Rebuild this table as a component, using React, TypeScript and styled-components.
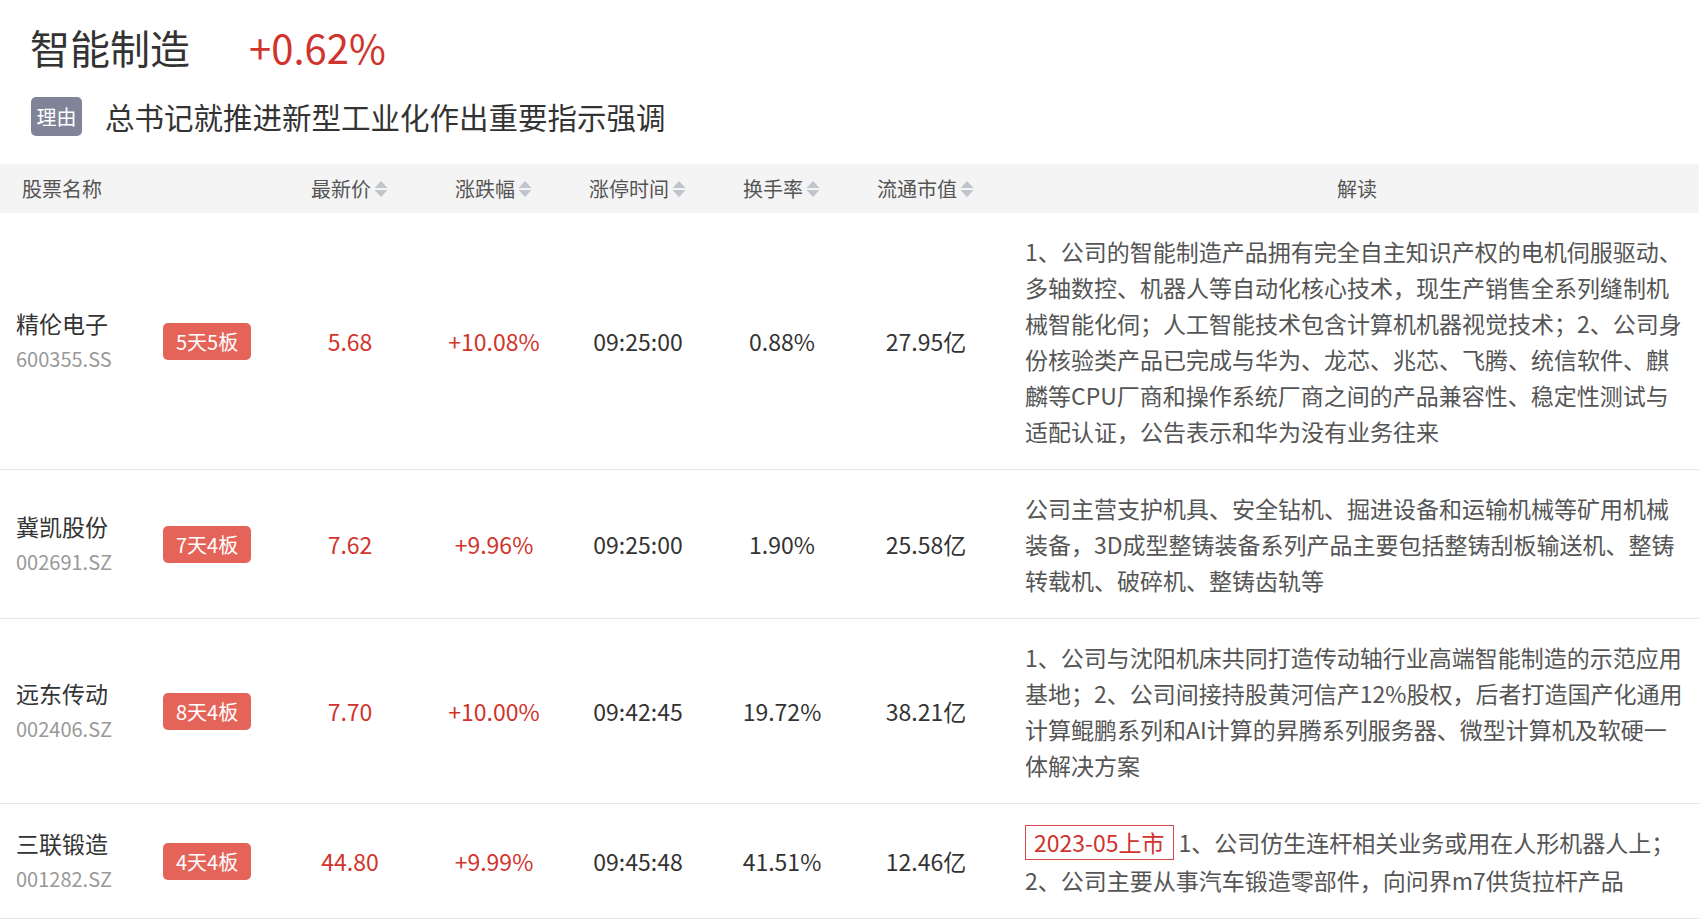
import React from 'react';
import styled, { createGlobalStyle } from 'styled-components';

const GlobalStyle = createGlobalStyle`
  html, body { margin: 0; padding: 0; background: #fff; }
  body {
    font-family: "Noto Sans CJK SC", "Noto Sans", sans-serif;
    color: #333;
  }
`;

const Page = styled.div`
  width: 1699px;
`;

const Top = styled.header`
  padding: 19px 0 0 30px;
`;

const TitleRow = styled.div`
  display: flex;
  align-items: center;
  height: 56px;
`;

const Title = styled.h1`
  margin: 0;
  font-size: 40px;
  font-weight: 400;
  line-height: 56px;
  color: #333;
`;

const Change = styled.span`
  margin-left: 59px;
  font-size: 40px;
  line-height: 56px;
  color: #d0342c;
`;

const ReasonRow = styled.div`
  display: flex;
  align-items: center;
  margin-top: 21px;
  height: 40px;
`;

const ReasonTag = styled.span`
  margin-left: 1px;
  width: 51px;
  height: 39px;
  border-radius: 5px;
  background: #7f8499;
  color: #fff;
  font-size: 20px;
  display: flex;
  align-items: center;
  justify-content: center;
`;

const ReasonText = styled.span`
  margin-left: 23px;
  font-size: 29.5px;
  line-height: 40px;
  color: #333;
`;

const Table = styled.section`
  margin-top: 28px;
`;

const HeadRow = styled.div`
  display: grid;
  grid-template-columns: 148px 130px repeat(5, 144px) 1fr;
  align-items: center;
  height: 49px;
  background: #f4f4f4;
  color: #555;
  font-size: 20px;
`;

const HeadName = styled.div`
  grid-column: span 2;
  padding-left: 22px;
`;

const HeadSort = styled.div`
  display: flex;
  align-items: center;
  justify-content: center;
  gap: 2px;
`;

const HeadDesc = styled.div`
  text-align: center;
  padding: 0 10px 0 27px;
`;

const SortIcon = styled.svg`
  display: block;
  width: 16px;
  height: 20px;
`;

const Row = styled.div`
  display: grid;
  grid-template-columns: 148px 130px repeat(5, 144px) 1fr;
  align-items: center;
  padding: 20px 0;
  border-bottom: 1px solid #e8e8e8;
`;

const NameCell = styled.div`
  padding-left: 16px;
  display: flex;
  flex-direction: column;
`;

const StockName = styled.span`
  font-size: 23px;
  line-height: 36px;
  color: #333;
`;

const StockCode = styled.span`
  font-size: 20px;
  line-height: 36px;
  color: #999;
`;

const Streak = styled.span`
  justify-self: start;
  margin-left: 15px;
  height: 37px;
  padding: 0 13px;
  border-radius: 5px;
  background: #e5645a;
  color: #fff;
  font-size: 20px;
  line-height: 37px;
`;

const Value = styled.div<{ $red?: boolean }>`
  text-align: center;
  font-size: 23px;
  line-height: 36px;
  color: ${(p) => (p.$red ? '#d0342c' : '#333')};
`;

const Desc = styled.div`
  padding: 0 10px 0 27px;
  font-size: 23px;
  line-height: 36px;
  color: #555;
`;

const ListedTag = styled.span`
  display: inline-block;
  box-sizing: border-box;
  height: 35px;
  line-height: 33px;
  padding: 0 8px;
  margin: 1px 5px 2px 0;
  border: 1px solid #d9474a;
  color: #d0342c;
  vertical-align: top;
`;

const Sort = () => (
  <SortIcon viewBox="0 0 16 20">
    <path d="M8 2 L14.5 9 L1.5 9 Z" fill="#c0c4cc" />
    <path d="M1.5 11 L14.5 11 L8 18 Z" fill="#c0c4cc" />
  </SortIcon>
);

type Stock = {
  name: string;
  code: string;
  streak: string;
  price: string;
  change: string;
  time: string;
  turnover: string;
  cap: string;
  listed?: string;
  desc: string;
};

const stocks: Stock[] = [
  {
    name: '精伦电子',
    code: '600355.SS',
    streak: '5天5板',
    price: '5.68',
    change: '+10.08%',
    time: '09:25:00',
    turnover: '0.88%',
    cap: '27.95亿',
    desc:
      '1、公司的智能制造产品拥有完全自主知识产权的电机伺服驱动、多轴数控、机器人等自动化核心技术，现生产销售全系列缝制机械智能化伺；人工智能技术包含计算机机器视觉技术；2、公司身份核验类产品已完成与华为、龙芯、兆芯、飞腾、统信软件、麒麟等CPU厂商和操作系统厂商之间的产品兼容性、稳定性测试与适配认证，公告表示和华为没有业务往来',
  },
  {
    name: '冀凯股份',
    code: '002691.SZ',
    streak: '7天4板',
    price: '7.62',
    change: '+9.96%',
    time: '09:25:00',
    turnover: '1.90%',
    cap: '25.58亿',
    desc:
      '公司主营支护机具、安全钻机、掘进设备和运输机械等矿用机械装备，3D成型整铸装备系列产品主要包括整铸刮板输送机、整铸转载机、破碎机、整铸齿轨等',
  },
  {
    name: '远东传动',
    code: '002406.SZ',
    streak: '8天4板',
    price: '7.70',
    change: '+10.00%',
    time: '09:42:45',
    turnover: '19.72%',
    cap: '38.21亿',
    desc:
      '1、公司与沈阳机床共同打造传动轴行业高端智能制造的示范应用基地；2、公司间接持股黄河信产12%股权，后者打造国产化通用计算鲲鹏系列和AI计算的昇腾系列服务器、微型计算机及软硬一体解决方案',
  },
  {
    name: '三联锻造',
    code: '001282.SZ',
    streak: '4天4板',
    price: '44.80',
    change: '+9.99%',
    time: '09:45:48',
    turnover: '41.51%',
    cap: '12.46亿',
    listed: '2023-05上市',
    desc: '1、公司仿生连杆相关业务或用在人形机器人上；2、公司主要从事汽车锻造零部件，向问界m7供货拉杆产品',
  },
];

const sortCols = ['最新价', '涨跌幅', '涨停时间', '换手率', '流通市值'];

export default function App() {
  return (
    <Page>
      <GlobalStyle />
      <Top>
        <TitleRow>
          <Title>智能制造</Title>
          <Change>+0.62%</Change>
        </TitleRow>
        <ReasonRow>
          <ReasonTag>理由</ReasonTag>
          <ReasonText>总书记就推进新型工业化作出重要指示强调</ReasonText>
        </ReasonRow>
      </Top>
      <Table>
        <HeadRow>
          <HeadName>股票名称</HeadName>
          {sortCols.map((c) => (
            <HeadSort key={c}>
              {c}
              <Sort />
            </HeadSort>
          ))}
          <HeadDesc>解读</HeadDesc>
        </HeadRow>
        {stocks.map((s) => (
          <Row key={s.code}>
            <NameCell>
              <StockName>{s.name}</StockName>
              <StockCode>{s.code}</StockCode>
            </NameCell>
            <Streak>{s.streak}</Streak>
            <Value $red>{s.price}</Value>
            <Value $red>{s.change}</Value>
            <Value>{s.time}</Value>
            <Value>{s.turnover}</Value>
            <Value>{s.cap}</Value>
            <Desc>
              {s.listed && <ListedTag>{s.listed}</ListedTag>}
              {s.desc}
            </Desc>
          </Row>
        ))}
      </Table>
    </Page>
  );
}
